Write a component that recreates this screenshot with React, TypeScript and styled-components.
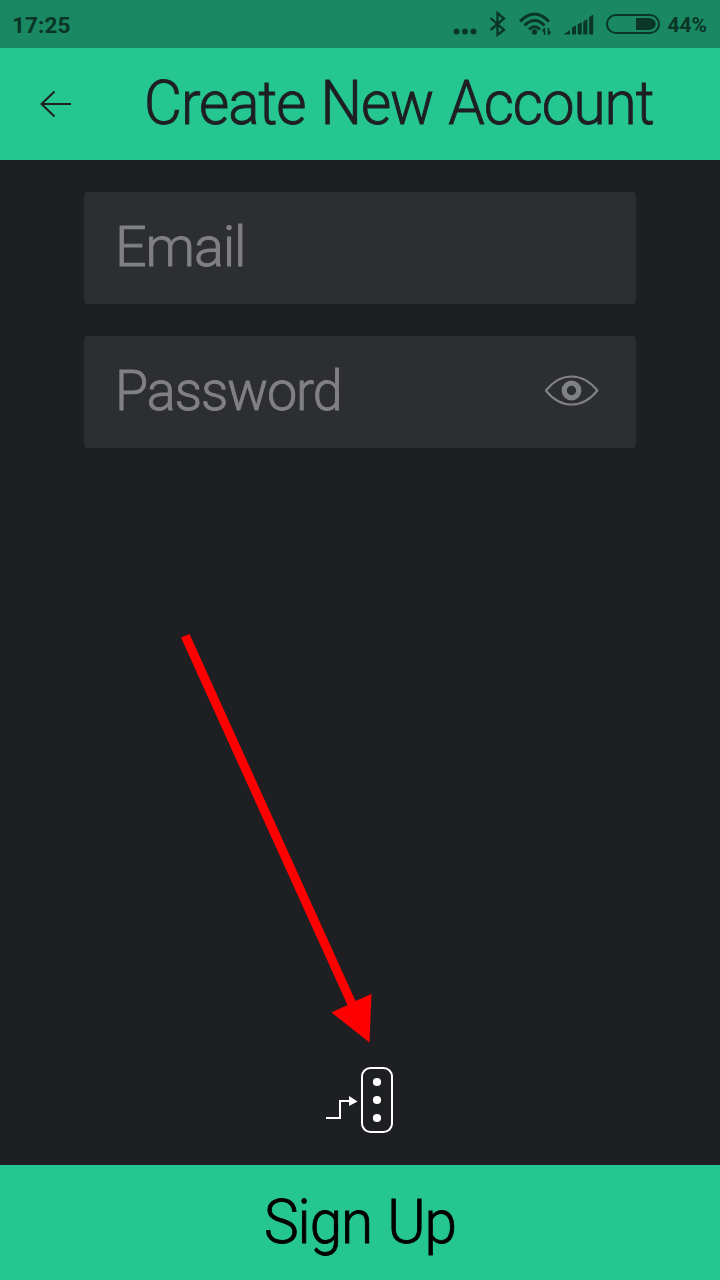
import React from 'react';
import styled, { createGlobalStyle } from 'styled-components';

const GlobalStyle = createGlobalStyle`
  *, *::before, *::after { box-sizing: border-box; }
  body { margin: 0; background: #1e1f23; font-family: Roboto, "Liberation Sans", sans-serif; }
  svg { display: block; }
`;

const Screen = styled.div`
  position: relative;
  display: flex;
  flex-direction: column;
  width: 720px;
  height: 1280px;
  overflow: hidden;
  background: #1e1f23;
`;

const StatusBar = styled.div`
  display: flex;
  align-items: center;
  justify-content: space-between;
  height: 48px;
  padding: 2px 13px 0 12px;
  background: #1a8963;
  color: #0a3527;
  font-weight: 700;
`;

const Clock = styled.span`
  padding-top: 1px;
  font-size: 22.7px;
  line-height: 46px;
`;

const Indicators = styled.div`
  display: flex;
  align-items: center;
`;

const BatteryLevel = styled.span`
  margin-left: 7px;
  font-size: 21px;
  line-height: 46px;
`;

const Header = styled.header`
  display: flex;
  align-items: center;
  height: 112px;
  padding-left: 40px;
  background: #25c690;
`;

const BackButton = styled.button`
  width: 32px;
  height: 28px;
  padding: 0;
  border: 0;
  background: none;
`;

const Label = styled.span<{ $size: number; $stretch: number }>`
  display: inline-block;
  font-size: ${(p) => p.$size}px;
  font-weight: 300;
  line-height: 1;
  letter-spacing: -1.1px;
  word-spacing: 2px;
  white-space: nowrap;
  -webkit-text-stroke: 0.9px currentColor;
  transform: scaleX(${(p) => p.$stretch});
  transform-origin: left center;
`;

const Title = styled.h1`
  display: flex;
  margin: 0 0 0 72px;
  color: #1e1f23;
  font-weight: 300;
  line-height: 1;
`;

const Form = styled.main`
  display: flex;
  flex: 1;
  flex-direction: column;
  align-items: center;
  gap: 32px;
  padding-top: 32px;
`;

const Field = styled.div`
  display: flex;
  align-items: center;
  justify-content: space-between;
  width: 552px;
  height: 112px;
  padding: 0 37px 2px 31px;
  border-radius: 4px;
  background: #2d2e32;
  color: #808184;
`;

const ServerButton = styled.button`
  width: 68px;
  height: 68px;
  margin: auto 0 31px;
  padding: 0;
  border: 0;
  background: none;
`;

const SignUp = styled.button`
  display: flex;
  align-items: center;
  height: 115px;
  padding: 0 0 0 264px;
  border: 0;
  background: #25c690;
  color: #000;
  font-family: inherit;
`;

const Pointer = styled.svg`
  position: absolute;
  left: 170px;
  top: 620px;
`;

export default function App() {
  return (
    <>
      <GlobalStyle />
      <Screen>
        <StatusBar>
          <Clock>17:25</Clock>
          <Indicators>
            <svg width="208" height="46" viewBox="452 2 208 46" fill="none" stroke="#0a3527">
              <g fill="#0a3527" stroke="none">
                <circle cx="456.5" cy="31.5" r="3" />
                <circle cx="465" cy="31.5" r="3" />
                <circle cx="473.5" cy="31.5" r="3" />
                <circle cx="534.5" cy="32" r="2.7" />
                <path d="M563.500 34.5L570 30V34.5ZM572 27.5L576 25.5V34.5H572ZM577.700 24.5L581.700 22V34.5H577.700ZM583.3 21.500L587.3 19V34.5H583.3ZM589.2 17L593.2 14.5V34.5H589.2Z" />
                <path d="M636 18H649C658 19 658 29 649 30H636Z" />
              </g>
              <path d="M490.500 18L504 30L497.500 35V13L504 18.500L490.500 30" strokeWidth="2.3" />
              <path d="M520 21.500Q534.500 6.500 549 21.500M524.500 25.500Q534.500 15.500 544.500 25.500M529 29.500Q534.500 24 540 29.500" strokeWidth="3" />
              <path d="M544.500 28V35M542.500 31.500L544.500 28.500M548.500 35V28M548.500 34.500L550.500 31.500" strokeWidth="1.600" />
              <rect x="607" y="15" width="52" height="18" rx="9" strokeWidth="2" />
            </svg>
            <BatteryLevel>44%</BatteryLevel>
          </Indicators>
        </StatusBar>

        <Header>
          <BackButton aria-label="Back">
            <svg width="32" height="28" viewBox="0 0 32 28" fill="none" stroke="#1e1f23" strokeWidth="2">
              <path d="M31 14H1.500M14.500 1.500L1.500 14L14.500 26.500" />
            </svg>
          </BackButton>
          <Title>
            <Label $size={61.5} $stretch={0.95}>Create New Account</Label>
          </Title>
        </Header>

        <Form>
          <Field>
            <Label $size={56} $stretch={0.995}>Email</Label>
          </Field>
          <Field>
            <Label $size={56} $stretch={0.963}>Password</Label>
            <svg width="55" height="34" viewBox="0 0 55 34" fill="none" stroke="#808184">
              <path d="M1.800 16.500C17 -2.300 38 -2.300 53.500 16.500C38 35.300 17 35.300 1.800 16.500Z" strokeWidth="2" strokeLinejoin="round" />
              <circle cx="27.500" cy="16.500" r="7.300" strokeWidth="5.200" />
            </svg>
          </Field>
          <ServerButton aria-label="Server settings">
            <svg width="68" height="68" viewBox="326 1066 68 68" fill="none" stroke="#fff" strokeWidth="2">
              <rect x="362" y="1068" width="30" height="64" rx="8.500" />
              <path d="M326 1118H340V1101H350" />
              <g fill="#fff" stroke="none">
                <path d="M349 1096L357.500 1101.500L349 1106Z" />
                <circle cx="377" cy="1082" r="4.100" />
                <circle cx="377" cy="1100" r="4.100" />
                <circle cx="377" cy="1118" r="4.100" />
              </g>
            </svg>
          </ServerButton>
        </Form>

        <SignUp>
          <Label $size={61.5} $stretch={0.95}>Sign Up</Label>
        </SignUp>

        <Pointer width="220" height="440" viewBox="170 620 220 440" fill="#f00">
          <path d="M181 637.500L189.500 634L355.500 1001L371.500 994L369.500 1042.500L331.500 1012.500L347.500 1005Z" />
        </Pointer>
      </Screen>
    </>
  );
}
